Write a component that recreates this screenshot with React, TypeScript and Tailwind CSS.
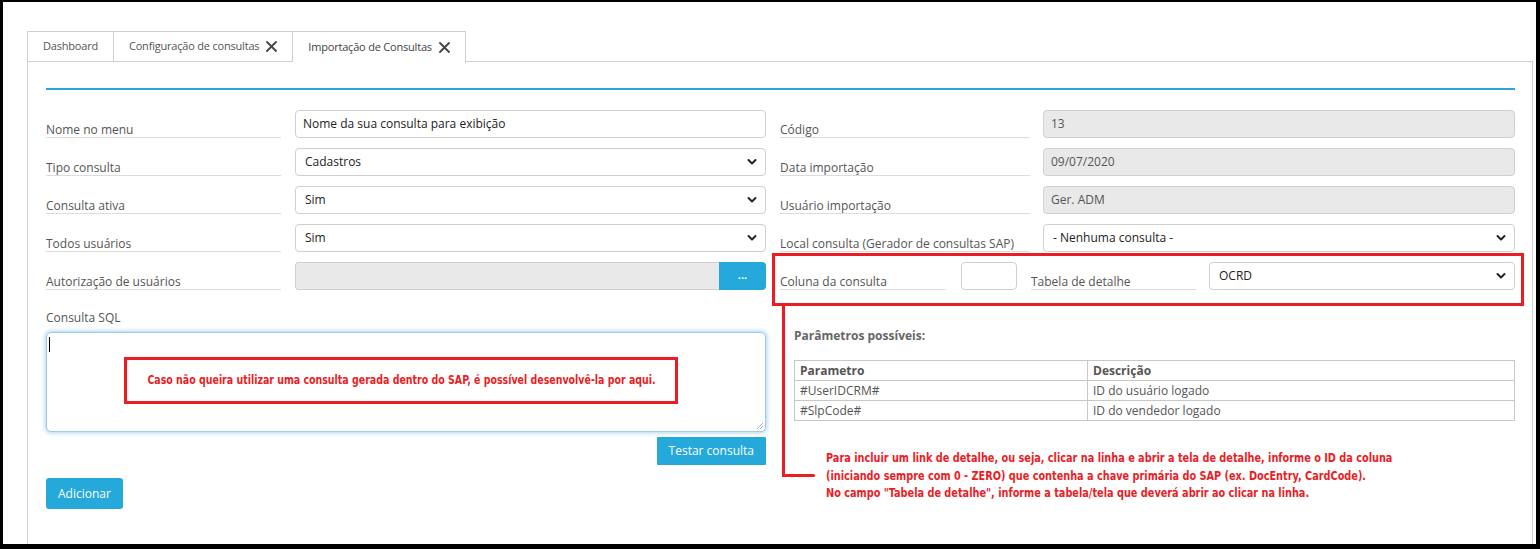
import React from 'react';

const font = { fontFamily: '"Open Sans", "Noto Sans", sans-serif' };
const narrow = { fontFamily: '"Liberation Sans Narrow", "DejaVu Sans Condensed", "Roboto", sans-serif' };

function CloseX() {
    return (
        <svg width="11" height="11" viewBox="0 0 11 11" className="ml-[7px]">
            <path d="M1 1 L10 10 M10 1 L1 10" stroke="#444" strokeWidth="1.8" strokeLinecap="round" />
        </svg>
    );
}

function Chevron() {
    return (
        <svg width="10" height="7" viewBox="0 0 10 7" className="absolute right-[8px] top-1/2 -translate-y-1/2 pointer-events-none">
            <path d="M1.5 1.5 L5 5 L8.5 1.5" stroke="#222" strokeWidth="2" fill="none" strokeLinecap="round" strokeLinejoin="round" />
        </svg>
    );
}

function Label({ text, width }: { text: string; width: string }) {
    return (
        <div className={`${width} h-[28px] flex items-end border-b border-[#dcdcdc] text-[12px] leading-[14px] text-[#555] whitespace-nowrap`}>
            {text}
        </div>
    );
}

function TextBox({ value, disabled }: { value: string; disabled?: boolean }) {
    return (
        <div
            className={`flex-1 h-[28px] rounded-[4px] border border-[#cfcfcf] flex items-center px-[7px] text-[12px] ${
                disabled ? 'bg-[#e9e9e9] text-[#555]' : 'bg-white text-[#222]'
            }`}
        >
            {value}
        </div>
    );
}

function SelectBox({ value }: { value: string }) {
    return (
        <div className="relative flex-1 h-[28px] rounded-[4px] border border-[#cfcfcf] bg-white flex items-center px-[9px] text-[12px] text-[#222]">
            {value}
            <Chevron />
        </div>
    );
}

export default function App() {
    return (
        <div className="w-[1540px] h-[549px] bg-white border-l-[3px] border-t-[2px] border-r-[4px] border-b-[5px] border-black flex flex-col pt-[29px] pl-[24px] pr-[3px] overflow-hidden" style={font}>
            {/* Tabs */}
            <div className="flex h-[31px] border-b border-[#cbd0d8] shrink-0">
                <div className="h-[31px] px-[15px] flex items-center border border-[#cbd0d8] text-[11px] tracking-[-0.2px] text-[#555] bg-white">
                    Dashboard
                </div>
                <div className="h-[31px] px-[15px] flex items-center border border-l-0 border-[#cbd0d8] text-[11px] tracking-[-0.2px] text-[#555] bg-white">
                    Configuração de consultas
                    <CloseX />
                </div>
                <div className="h-[32px] px-[15px] flex items-center border border-l-0 border-b-0 border-[#cbd0d8] text-[11px] tracking-[-0.2px] text-[#444] bg-white -mb-px">
                    Importação de Consultas
                    <CloseX />
                </div>
            </div>

            {/* Panel */}
            <div className="flex-1 border-l border-r border-[#cbd0d8] pt-[26px] px-[18px] pr-[17px]">
                <div className="h-[2px] bg-[#2ba6d6]" />

                <div className="flex gap-[14px] mt-[20px]">
                    {/* Left column */}
                    <div className="w-[720px] flex flex-col">
                        <div className="flex flex-col gap-[10px]">
                            <div className="flex gap-[14px]">
                                <Label text="Nome no menu" width="w-[235px]" />
                                <TextBox value="Nome da sua consulta para exibição" />
                            </div>
                            <div className="flex gap-[14px]">
                                <Label text="Tipo consulta" width="w-[235px]" />
                                <SelectBox value="Cadastros" />
                            </div>
                            <div className="flex gap-[14px]">
                                <Label text="Consulta ativa" width="w-[235px]" />
                                <SelectBox value="Sim" />
                            </div>
                            <div className="flex gap-[14px]">
                                <Label text="Todos usuários" width="w-[235px]" />
                                <SelectBox value="Sim" />
                            </div>
                            <div className="flex gap-[14px]">
                                <Label text="Autorização de usuários" width="w-[235px]" />
                                <div className="flex-1 h-[28px] flex">
                                    <div className="flex-1 rounded-l-[4px] border border-r-0 border-[#cfcfcf] bg-[#e9e9e9]" />
                                    <div className="w-[47px] rounded-r-[4px] bg-[#25a8da] text-white text-[11px] font-bold flex items-center justify-center pb-[2px]">
                                        ...
                                    </div>
                                </div>
                            </div>
                        </div>

                        <div className="mt-[20px] text-[12px] leading-[16px] text-[#555]">Consulta SQL</div>
                        <div className="relative mt-[6px] h-[100px] rounded-[5px] border border-[#9ecbe8] shadow-[0_0_4px_1px_rgba(102,175,233,0.55)] bg-white">
                            <div className="absolute left-[2px] top-[4px] w-px h-[15px] bg-black" />
                            <div className="absolute left-[77px] top-[24px] w-[554px] h-[47px] border-[3px] border-[#ec1c24] flex items-center justify-center overflow-visible">
                                <span className="inline-block whitespace-nowrap scale-x-[0.84] text-[12.5px] font-bold text-[#ec1c24]" style={narrow}>
                                    Caso não queira utilizar uma consulta gerada dentro do SAP, é possível desenvolvê-la por aqui.
                                </span>
                            </div>
                            <svg width="8" height="8" viewBox="0 0 8 8" className="absolute right-[1px] bottom-[1px]">
                                <path d="M7 1 L1 7 M7 4 L4 7" stroke="#999" strokeWidth="0.8" />
                            </svg>
                        </div>
                        <div className="flex justify-end mt-[5px]">
                            <div className="h-[28px] px-[12px] bg-[#25a8da] text-white text-[12px] flex items-center rounded-[1px]">
                                Testar consulta
                            </div>
                        </div>
                        <div className="mt-[13px]">
                            <div className="inline-flex h-[31px] px-[12px] bg-[#25a8da] text-white text-[12px] items-center rounded-[3px]">
                                Adicionar
                            </div>
                        </div>
                    </div>

                    {/* Right column */}
                    <div className="relative w-[735px] flex flex-col">
                        <div className="flex flex-col gap-[10px]">
                            <div className="flex gap-[13px]">
                                <Label text="Código" width="w-[250px]" />
                                <TextBox value="13" disabled />
                            </div>
                            <div className="flex gap-[13px]">
                                <Label text="Data importação" width="w-[250px]" />
                                <TextBox value="09/07/2020" disabled />
                            </div>
                            <div className="flex gap-[13px]">
                                <Label text="Usuário importação" width="w-[250px]" />
                                <TextBox value="Ger. ADM" disabled />
                            </div>
                            <div className="flex gap-[13px]">
                                <Label text="Local consulta (Gerador de consultas SAP)" width="w-[250px]" />
                                <SelectBox value="- Nenhuma consulta -" />
                            </div>
                        </div>

                        <div className="-mx-[8px] -mr-[9px] mt-[1px] border-[3px] border-[#ec1c24] pt-[6px] pb-[13px] pl-[5px] pr-[6px] flex">
                            <Label text="Coluna da consulta" width="w-[166px]" />
                            <div className="ml-[15px] w-[56px] h-[28px] rounded-[4px] border border-[#cfcfcf] bg-white" />
                            <div className="ml-[14px]">
                                <Label text="Tabela de detalhe" width="w-[165px]" />
                            </div>
                            <div className="ml-[13px] flex-1 flex">
                                <SelectBox value="OCRD" />
                            </div>
                        </div>

                        <div className="ml-[14px] mt-[22px] text-[12px] leading-[16px] font-bold text-[#666]">Parâmetros possíveis:</div>
                        <table className="ml-[14px] mt-[16px] w-[721px] border-collapse text-[12px] text-[#555]">
                            <thead>
                                <tr className="h-[20px]">
                                    <th className="w-[293px] border border-[#c8c8c8] text-left font-bold px-[5px] py-0 leading-[18px]">Parametro</th>
                                    <th className="border border-[#c8c8c8] text-left font-bold px-[5px] py-0 leading-[18px]">Descrição</th>
                                </tr>
                            </thead>
                            <tbody>
                                <tr className="h-[20px]">
                                    <td className="border border-[#c8c8c8] px-[5px] leading-[18px]">#UserIDCRM#</td>
                                    <td className="border border-[#c8c8c8] px-[5px] leading-[18px]">ID do usuário logado</td>
                                </tr>
                                <tr className="h-[20px]">
                                    <td className="border border-[#c8c8c8] px-[5px] leading-[18px]">#SlpCode#</td>
                                    <td className="border border-[#c8c8c8] px-[5px] leading-[18px]">ID do vendedor logado</td>
                                </tr>
                            </tbody>
                        </table>

                        <div className="ml-[46px] mt-[28px] text-[12.5px] leading-[17.5px] font-bold text-[#ec1c24] whitespace-nowrap origin-left scale-x-[0.865]" style={narrow}>
                            <div>Para incluir um link de detalhe, ou seja, clicar na linha e abrir a tela de detalhe, informe o ID da coluna</div>
                            <div>(iniciando sempre com 0 - ZERO) que contenha a chave primária do SAP (ex. DocEntry, CardCode).</div>
                            <div>No campo "Tabela de detalhe", informe a tabela/tela que deverá abrir ao clicar na linha.</div>
                        </div>

                        {/* connector annotation */}
                        <div className="absolute left-[2px] top-[196px] w-[3px] h-[171px] bg-[#ec1c24]" />
                        <div className="absolute left-[2px] top-[364px] w-[33px] h-[3px] rounded-r-[2px] bg-[#ec1c24]" />
                    </div>
                </div>
            </div>
        </div>
    );
}
